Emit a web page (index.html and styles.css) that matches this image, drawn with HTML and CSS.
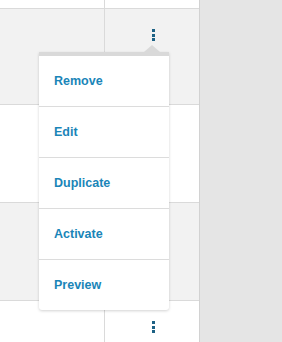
FILE: index.html
```html
<!DOCTYPE html>
<html lang="en">
<head>
    <meta charset="UTF-8">
    <meta name="viewport" content="width=device-width, initial-scale=1.0">
    <title>Row actions</title>
    <link rel="stylesheet" href="styles.css">
</head>
<body>

    <div class="layout">
        <div class="table">
            <div class="row row-first">
                <div class="cell cell-main"></div>
                <div class="cell cell-actions"></div>
            </div>
            <div class="row row-alt">
                <div class="cell cell-main"></div>
                <div class="cell cell-actions">
                    <span class="kebab"><i></i><i></i><i></i></span>
                </div>
            </div>
            <div class="row row-tall">
                <div class="cell cell-main"></div>
                <div class="cell cell-actions"></div>
            </div>
            <div class="row row-alt">
                <div class="cell cell-main"></div>
                <div class="cell cell-actions"></div>
            </div>
            <div class="row row-last">
                <div class="cell cell-main"></div>
                <div class="cell cell-actions">
                    <span class="kebab"><i></i><i></i><i></i></span>
                </div>
            </div>

            <!-- dropdown opened from the second row -->
            <ul class="menu">
                <li><a href="#">Remove</a></li>
                <li><a href="#">Edit</a></li>
                <li><a href="#">Duplicate</a></li>
                <li><a href="#">Activate</a></li>
                <li><a href="#">Preview</a></li>
            </ul>
        </div>
        <div class="side"></div>
    </div>

</body>
</html>
```

FILE: styles.css
```css
body {
    margin: 0;
    font-family: "Liberation Sans", Arial, sans-serif;
    background-color: #e5e5e5;
}

.layout {
    display: flex;
    height: 342px;
    overflow: hidden;
}

.table {
    position: relative;
    width: 199px;
    background-color: #fff;
    border-right: 1px solid #d2d2d2;
}

.side {
    flex: 1;
    background-color: #e5e5e5;
}

.row {
    display: flex;
    border-bottom: 1px solid #dadada;
}

.row-first {
    height: 8px;
}

.row-alt {
    height: 95px;
    background-color: #f2f2f2;
}

.row-tall {
    height: 97px;
}

.row-alt + .row-tall + .row-alt {
    height: 97px;
}

.row-last {
    height: 60px;
    border-bottom: none;
}

.cell-main {
    width: 104px;
    border-right: 1px solid #dadada;
}

.cell-actions {
    flex: 1;
    display: flex;
    justify-content: center;
    align-items: flex-start;
    padding-left: 2px;
}

.row-alt .cell-actions {
    padding-top: 20px;
}

.row-last .cell-actions {
    padding-top: 20px;
}

.kebab {
    display: flex;
    flex-direction: column;
    gap: 1.5px;
}

.kebab i {
    display: block;
    width: 3px;
    height: 3px;
    background-color: #1d6184;
}

.menu {
    position: absolute;
    left: 39px;
    top: 52px;
    width: 130px;
    margin: 0;
    padding: 0;
    list-style: none;
    background-color: #fff;
    border-top: 4px solid #d9d9d9;
    border-radius: 0 0 3px 3px;
    box-shadow: 0 1px 3px rgba(0, 0, 0, 0.18);
}

.menu::before {
    content: "";
    position: absolute;
    top: -11px;
    left: 105px;
    border-left: 8px solid transparent;
    border-right: 8px solid transparent;
    border-bottom: 7px solid #d9d9d9;
}

.menu li {
    height: 50px;
    border-bottom: 1px solid #dcdcdc;
}

.menu li:last-child {
    border-bottom: none;
}

.menu a {
    display: flex;
    align-items: center;
    height: 100%;
    padding-left: 15px;
    font-size: 12.5px;
    font-weight: bold;
    color: #1a85b8;
    text-decoration: none;
}
```
